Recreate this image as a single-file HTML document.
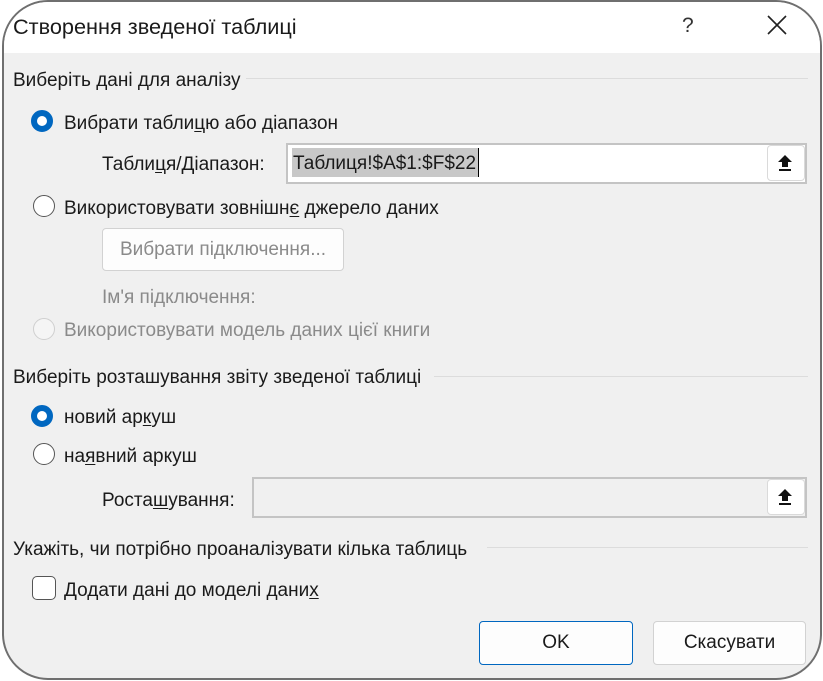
<!DOCTYPE html>
<html><head><meta charset="utf-8"><style>
*{margin:0;padding:0;box-sizing:border-box}
body{width:823px;height:681px;background:#fff;position:relative;overflow:hidden;font-family:"Liberation Sans","DejaVu Sans",sans-serif;font-size:19px;color:#1a1a1a}
.dlg{position:absolute;left:2px;top:0;width:820px;height:680px;border:2px solid #6f6f6f;border-radius:46px;background:#f0f0f0;overflow:hidden}
.tb{position:absolute;left:0;top:0;width:100%;height:51px;background:#fff}
.a{position:absolute;white-space:nowrap;line-height:22px;margin-top:1px}
.line{position:absolute;height:1px;background:#dcdcdc}
.rad{position:absolute;width:22px;height:22px;border-radius:50%;border:1.5px solid #555;background:#fff}
.rad.on{border:6px solid #0067c0;background:#fff}
.rad.dis{border-color:#cfcfcf;background:#f5f5f5}
.inp{position:absolute;border:2px solid #c4c4c4;background:#fff}
.ub{position:absolute;width:38px;height:36px;background:#fff;border:1px solid #dadada;border-radius:4px}
.btn{position:absolute;background:#fdfdfd;border:1px solid #d2d2d2;border-radius:4px;text-align:center}
u{text-decoration:underline;text-underline-offset:2px}
.g{color:#8a8a8a}
</style></head><body>
<div class="dlg">
<div class="tb"></div>
</div>
<div class="a" style="left:13px;top:15px;font-size:21.7px">Створення зведеної таблиці</div>
<div class="a" style="left:682px;top:14px;font-size:21px;color:#333">?</div>
<svg style="position:absolute;left:766px;top:14px" width="22" height="22"><path d="M2 2L20 20M20 2L2 20" stroke="#222" stroke-width="1.6"/></svg>

<div class="a" style="left:13px;top:69px">Виберіть дані для аналізу</div>
<div class="line" style="left:246px;top:78px;width:562px"></div>
<div class="rad on" style="left:31px;top:110px"></div>
<div class="a" style="left:64px;top:112px">Вибрати табли<u>ц</u>ю або діапазон</div>
<div class="a" style="left:102px;top:153px">Табли<u>ц</u>я/Діапазон:</div>
<div class="inp" style="left:286px;top:143px;width:521px;height:41px"></div>
<div style="position:absolute;left:292px;top:148px;width:186px;height:29px;background:#c8c8c8"></div>
<div class="a" style="left:293px;top:152px">Таблиця!$A$1:$F$22</div>
<div style="position:absolute;left:478px;top:148px;width:1px;height:29px;background:#000"></div>
<div class="ub" style="left:767px;top:145px"></div>
<svg style="position:absolute;left:776px;top:153px" width="20" height="20"><path d="M9 2L2 9H6V14H12V9H16Z" fill="#111"/><rect x="3" y="16" width="12" height="2" fill="#111"/></svg>

<div class="rad" style="left:33px;top:195px"></div>
<div class="a" style="left:64px;top:197px">Використовувати зовнішн<u>є</u> джерело даних</div>
<div class="btn g" style="left:102px;top:228px;width:242px;height:43px;line-height:41px">Вибрати підключення...</div>
<div class="a g" style="left:102px;top:286px">Ім'я підключення:</div>
<div class="rad dis" style="left:33px;top:318px"></div>
<div class="a g" style="left:64px;top:319px">Використовувати модель даних цієї книги</div>

<div class="a" style="left:13px;top:366px">Виберіть розташування звіту зведеної таблиці</div>
<div class="line" style="left:434px;top:376px;width:374px"></div>
<div class="rad on" style="left:31px;top:405px"></div>
<div class="a" style="left:64px;top:406px">новий ар<u>к</u>уш</div>
<div class="rad" style="left:33px;top:443px"></div>
<div class="a" style="left:64px;top:445px">на<u>я</u>вний аркуш</div>
<div class="a" style="left:102px;top:489px">Роста<u>ш</u>ування:</div>
<div class="inp" style="left:252px;top:477px;width:555px;height:41px;background:#f0f0f0"></div>
<div class="ub" style="left:767px;top:479px"></div>
<svg style="position:absolute;left:776px;top:487px" width="20" height="20"><path d="M9 2L2 9H6V14H12V9H16Z" fill="#111"/><rect x="3" y="16" width="12" height="2" fill="#111"/></svg>

<div class="a" style="left:13px;top:538px">Укажіть, чи потрібно проаналізувати кілька таблиць</div>
<div class="line" style="left:487px;top:547px;width:321px"></div>
<div style="position:absolute;left:32px;top:576px;width:24px;height:24px;border:1.5px solid #555;border-radius:5px;background:#fff"></div>
<div class="a" style="left:64px;top:579px">Додати дані до моделі дани<u>х</u></div>

<div class="btn" style="left:479px;top:621px;width:154px;height:44px;line-height:42px;border:1.5px solid #0067c0">OK</div>
<div class="btn" style="left:653px;top:621px;width:153px;height:44px;line-height:42px">Скасувати</div>
</body></html>
